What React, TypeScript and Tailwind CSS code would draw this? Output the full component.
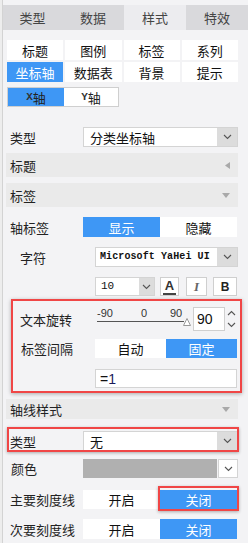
import React from "react";

const BLUE = "bg-[#3e97f5]";

function Chevron({ color = "#555" }: { color?: string }) {
  return (
    <svg width="9" height="6" viewBox="0 0 9 6" fill="none">
      <path d="M1 1 L4.5 4.5 L8 1" stroke={color} strokeWidth="1.1" />
    </svg>
  );
}

function Select({
  text,
  width,
  mono = false,
  arrowW = 20,
}: {
  text: string;
  width: string;
  mono?: boolean;
  arrowW?: number;
}) {
  return (
    <div className={`${width} h-full flex border border-[#d4d4d4] bg-white`}>
      <div
        className={`flex-1 flex items-center text-[#111] overflow-hidden whitespace-nowrap ${
          mono ? "pl-[4px] text-[10px] font-semibold" : "pl-[6px] text-[13px]"
        }`}
        style={mono ? { fontFamily: "'Liberation Mono', monospace", letterSpacing: "0.1px" } : undefined}
      >
        {text}
      </div>
      <div
        className="h-full flex items-center justify-center bg-[#dcdcdc]"
        style={{ width: arrowW }}
      >
        <Chevron />
      </div>
    </div>
  );
}

function Toggle({
  a,
  b,
  active,
  w,
}: {
  a: string;
  b: string;
  active: 0 | 1;
  w: string;
}) {
  return (
    <div className="flex h-full">
      <div
        className={`${w} h-full flex items-center justify-center text-[13px] ${
          active === 0 ? `${BLUE} text-white` : "bg-white text-[#111]"
        }`}
      >
        {a}
      </div>
      <div
        className={`${w} h-full flex items-center justify-center text-[13px] ${
          active === 1 ? `${BLUE} text-white` : "bg-white text-[#111]"
        }`}
      >
        {b}
      </div>
    </div>
  );
}

function Header({ text, dir }: { text: string; dir: "left" | "down" }) {
  return (
    <div className="ml-[3px] w-[232px] h-full bg-[#eaeaea] flex items-center justify-between pl-[4px] pr-[8px]">
      <span className="text-[13px] text-[#222]">{text}</span>
      {dir === "left" ? (
        <svg width="5" height="7" viewBox="0 0 5 7">
          <path d="M5 0 L0 3.5 L5 7 Z" fill="#a9a9a9" />
        </svg>
      ) : (
        <svg width="8" height="5" viewBox="0 0 8 5">
          <path d="M0 0 L8 0 L4 5 Z" fill="#a9a9a9" />
        </svg>
      )}
    </div>
  );
}

export default function App() {
  const font = {
    fontFamily: "'Microsoft YaHei','Noto Sans CJK SC','Noto Sans',sans-serif",
  };
  return (
    <div
      className="w-[248px] h-[543px] bg-[#f3f3f5] relative overflow-hidden flex leading-none"
      style={font}
    >
      <div className="w-[3px] h-full bg-[#ededed] border-r border-[#d3d3d3] shrink-0" />
      <div className="flex-1 flex flex-col">
        {/* top tabs */}
        <div className="mt-[5px] h-[25px] grid grid-cols-[59px_62px_62px_62px] text-[13px] text-[#444]">
          <div className="bg-[#d9d9dc] flex items-center justify-center">类型</div>
          <div className="bg-[#d9d9dc] flex items-center justify-center">数据</div>
          <div className="bg-[#ececef] flex items-center justify-center">样式</div>
          <div className="bg-[#d9d9dc] flex items-center justify-center">特效</div>
        </div>

        {/* sub tabs */}
        <div className="ml-[4px] mt-[10px] w-[231px] grid grid-cols-4 gap-x-[2px] gap-y-[2px] text-[13px]">
          {["标题", "图例", "标签", "系列", "坐标轴", "数据表", "背景", "提示"].map((t) => (
            <div
              key={t}
              className={`h-[20px] flex items-center justify-center ${
                t === "坐标轴" ? `${BLUE} text-white` : "bg-white text-[#111]"
              }`}
            >
              {t}
            </div>
          ))}
        </div>

        {/* X / Y */}
        <div className="ml-[4px] mt-[5px] h-[20px] w-[112px] flex border border-[#cfcfcf] text-[13px] text-[#222]">
          <div className={`w-[56px] h-full ${BLUE} flex items-center justify-center`}>
            <span className="text-[11px] font-semibold text-[#333]" style={{ fontFamily: "'Liberation Mono',monospace" }}>X</span>
            <span>轴</span>
          </div>
          <div className="flex-1 h-full bg-white flex items-center justify-center">
            <span className="text-[11px] font-semibold text-[#333]" style={{ fontFamily: "'Liberation Mono',monospace" }}>Y</span>
            <span>轴</span>
          </div>
        </div>

        {/* 类型 */}
        <div className="mt-[20px] h-[20px] flex items-center">
          <div className="w-[80px] pl-[7px] text-[13px] text-[#222]">类型</div>
          <Select text="分类坐标轴" width="w-[155px]" />
        </div>

        <div className="mt-[6px] h-[24px]">
          <Header text="标题" dir="left" />
        </div>
        <div className="mt-[6px] h-[24px]">
          <Header text="标签" dir="down" />
        </div>

        {/* 轴标签 */}
        <div className="mt-[10px] h-[20px] flex items-center">
          <div className="w-[80px] pl-[7px] text-[13px] text-[#222]">轴标签</div>
          <Toggle a="显示" b="隐藏" active={0} w="w-[77px]" />
        </div>

        {/* 字符 */}
        <div className="mt-[10px] h-[20px] flex items-center">
          <div className="w-[92px] pl-[17px] text-[13px] text-[#222]">字符</div>
          <Select text="Microsoft YaHei UI" width="w-[143px]" mono />
        </div>

        {/* font size row */}
        <div className="mt-[10px] h-[19px] flex items-center pl-[92px]">
          <div className="w-[60px] h-full flex border border-[#d4d4d4] bg-white">
            <div
              className="flex-1 flex items-center pl-[5px] text-[11px] text-[#111]"
              style={{ fontFamily: "'Liberation Mono',monospace" }}
            >
              10
            </div>
            <div className="w-[15px] h-full bg-[#dcdcdc] flex items-center justify-center">
              <Chevron />
            </div>
          </div>
          <div className="ml-[5px] w-[19px] h-full bg-white border border-[#cfcfcf] flex flex-col items-center justify-center">
            <span className="text-[13px] font-bold text-[#333] leading-none mt-[1px]" style={{ fontFamily: "Arial, 'Liberation Sans', sans-serif" }}>
              A
            </span>
            <div className="w-[13px] h-[3px] bg-[#444] mt-[1px]" />
          </div>
          <div className="ml-[7px] w-[21px] h-full bg-white border border-[#cfcfcf] flex items-center justify-center">
            <span className="text-[13px] italic font-bold text-[#666]" style={{ fontFamily: "'Liberation Serif', serif" }}>
              I
            </span>
          </div>
          <div className="ml-[6px] w-[24px] h-full bg-white border border-[#cfcfcf] flex items-center justify-center">
            <span className="text-[12px] font-bold text-[#222]" style={{ fontFamily: "'Liberation Sans', sans-serif" }}>
              B
            </span>
          </div>
        </div>

        {/* 文本旋转 */}
        <div className="mt-[11px] h-[24px] flex items-center">
          <div className="w-[92px] pl-[17px] text-[13px] text-[#222] mt-[1px]">文本旋转</div>
          <div className="relative w-[98px] h-full text-[11px] text-[#333]" style={{ fontFamily: "'Liberation Sans',sans-serif" }}>
            <span className="absolute left-[2px] top-[1px]">-90</span>
            <span className="absolute left-[46px] top-[1px]">0</span>
            <span className="absolute left-[75px] top-[1px]">90</span>
            <div className="absolute left-[2px] top-[14px] w-[87px] h-px bg-[#555]" />
            <svg className="absolute left-[88px] top-[11px]" width="8" height="8" viewBox="0 0 8 8">
              <path d="M4 0.5 L7.5 7.5 L0.5 7.5 Z" fill="white" stroke="#999" strokeWidth="1" />
            </svg>
          </div>
          <div className="w-[32px] h-full bg-white border border-[#cfcfcf] flex items-center pl-[3px] text-[14px] text-[#111]" style={{ fontFamily: "'Liberation Sans',sans-serif" }}>
            90
          </div>
          <div className="ml-[2px] h-full flex flex-col justify-center gap-[6px]">
            <svg width="9" height="6" viewBox="0 0 9 6">
              <path d="M1 5 L4.5 1.5 L8 5" stroke="#555" strokeWidth="1.1" fill="none" />
            </svg>
            <svg width="9" height="6" viewBox="0 0 9 6">
              <path d="M1 1 L4.5 4.5 L8 1" stroke="#555" strokeWidth="1.1" fill="none" />
            </svg>
          </div>
        </div>

        {/* 标签间隔 */}
        <div className="mt-[8px] h-[19px] flex items-center">
          <div className="w-[92px] pl-[18px] text-[13px] text-[#222]">标签间隔</div>
          <Toggle a="自动" b="固定" active={1} w="w-[71px]" />
        </div>

        {/* =1 */}
        <div className="mt-[11px] h-[19px] flex pl-[92px]">
          <div className="w-[142px] h-full bg-white border border-[#d4d4d4] flex items-center pl-[4px] text-[14px] text-[#111]" style={{ fontFamily: "'Liberation Sans',sans-serif" }}>
            =<span className="text-[#1a1a5a]">1</span>
          </div>
        </div>

        <div className="mt-[11px] h-[20px]">
          <Header text="轴线样式" dir="down" />
        </div>

        {/* 类型 无 */}
        <div className="mt-[12px] h-[20px] flex items-center">
          <div className="w-[80px] pl-[7px] text-[13px] text-[#222]">类型</div>
          <Select text="无" width="w-[155px]" />
        </div>

        {/* 颜色 */}
        <div className="mt-[8px] h-[19px] flex items-center">
          <div className="w-[80px] pl-[8px] text-[13px] text-[#222]">颜色</div>
          <div className="w-[134px] h-full bg-[#b0b0b0]" />
          <div className="ml-[1px] w-[20px] h-full bg-white border border-[#d4d4d4] flex items-center justify-center">
            <Chevron />
          </div>
        </div>

        {/* 主要刻度线 */}
        <div className="mt-[12px] h-[19px] flex items-center">
          <div className="w-[80px] pl-[7px] text-[13px] text-[#222]">主要刻度线</div>
          <Toggle a="开启" b="关闭" active={1} w="w-[77px]" />
        </div>

        {/* 次要刻度线 */}
        <div className="mt-[10px] h-[20px] flex items-center">
          <div className="w-[80px] pl-[7px] text-[13px] text-[#222]">次要刻度线</div>
          <Toggle a="开启" b="关闭" active={1} w="w-[77px]" />
        </div>
      </div>

      {/* red annotation boxes */}
      <div className="absolute left-[11px] top-[299px] w-[231px] h-[94px] border-2 border-[#f04646] shadow-[0_1px_4px_rgba(0,0,0,0.3)]" />
      <div className="absolute left-[7px] top-[427px] w-[232px] h-[25px] border-2 border-[#f04646] shadow-[0_1px_3px_rgba(0,0,0,0.3)]" />
      <div className="absolute left-[158px] top-[486px] w-[81px] h-[25px] border-2 border-[#f04646] shadow-[0_1px_3px_rgba(0,0,0,0.3)]" />
    </div>
  );
}
